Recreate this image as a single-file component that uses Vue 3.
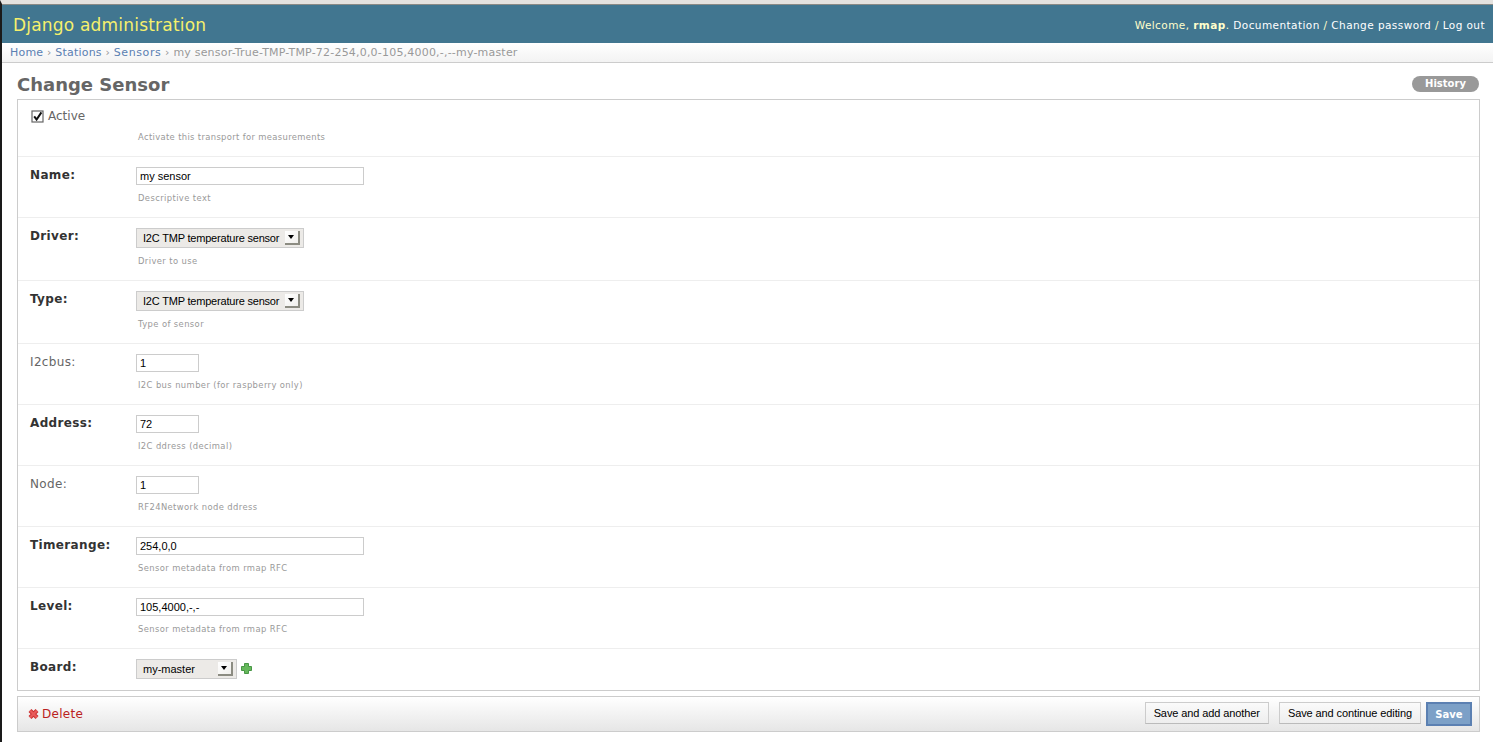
<script setup>
const rows = [
  { label: 'Name', req: true, kind: 'text', w: 'wide', value: 'my sensor', help: 'Descriptive text' },
  { label: 'Driver', req: true, kind: 'select', value: 'I2C TMP temperature sensor', help: 'Driver to use' },
  { label: 'Type', req: true, kind: 'select', value: 'I2C TMP temperature sensor', help: 'Type of sensor' },
  { label: 'I2cbus', req: false, kind: 'text', w: 'short', value: '1', help: 'I2C bus number (for raspberry only)' },
  { label: 'Address', req: true, kind: 'text', w: 'short', value: '72', help: 'I2C ddress (decimal)' },
  { label: 'Node', req: false, kind: 'text', w: 'short', value: '1', help: 'RF24Network node ddress' },
  { label: 'Timerange', req: true, kind: 'text', w: 'wide', value: '254,0,0', help: 'Sensor metadata from rmap RFC' },
  { label: 'Level', req: true, kind: 'text', w: 'wide', value: '105,4000,-,-', help: 'Sensor metadata from rmap RFC' },
]
</script>

<template>
  <div class="page">
    <header class="head">
      <div class="brand">Django administration</div>
      <div class="tools">Welcome, <strong>rmap</strong>. <a>Documentation</a> / <a>Change password</a> / <a>Log out</a></div>
    </header>
    <nav class="crumbs"><a>Home</a> › <a>Stations</a> › <a class="last">Sensors</a> › my sensor-True-TMP-TMP-72-254,0,0-105,4000,-,--my-master</nav>
    <main class="content">
      <div class="title-row">
        <h1>Change Sensor</h1>
        <a class="history">History</a>
      </div>
      <section class="fieldset">
        <div class="row row-check">
          <div class="check-line">
            <span class="checkbox">
              <svg width="13" height="13" viewBox="0 0 13 13"><rect x="1" y="1" width="11" height="11" fill="#fff" stroke="#666" stroke-width="1.2"/><path d="M3.2 6.4 L5.6 9.6 L10.4 2.4" fill="none" stroke="#111" stroke-width="2"/></svg>
            </span>
            <span class="check-label">Active</span>
          </div>
          <p class="help check-help">Activate this transport for measurements</p>
        </div>
        <div v-for="r in rows" :key="r.label" class="row">
          <div class="field">
            <label :class="{ req: r.req }">{{ r.label }}:</label>
            <input v-if="r.kind === 'text'" class="input" :class="r.w" :value="r.value" />
            <div v-else class="select"><span>{{ r.value }}</span><i class="arrow"></i></div>
          </div>
          <p class="help">{{ r.help }}</p>
        </div>
        <div class="row row-last">
          <div class="field">
            <label class="req">Board:</label>
            <div class="select select-short"><span>my-master</span><i class="arrow"></i></div>
            <svg class="plus" width="11" height="11" viewBox="0 0 11 11"><path d="M3.5 .5h4v3h3v4h-3v3h-4v-3h-3v-4h3z" fill="#66b85c" stroke="#3c8f3a" stroke-width=".9"/></svg>
          </div>
        </div>
      </section>
      <footer class="submit">
        <a class="delete">
          <svg width="11" height="12" viewBox="0 0 11 12"><path d="M2 2.5 L9 9.5 M9 2.5 L2 9.5" fill="none" stroke="#c92f2f" stroke-width="4.2"/><path d="M2 2.5 L9 9.5 M9 2.5 L2 9.5" fill="none" stroke="#e85a5a" stroke-width="2.4"/></svg>
          Delete
        </a>
        <div class="buttons">
          <button class="btn">Save and add another</button>
          <button class="btn">Save and continue editing</button>
          <button class="btn default">Save</button>
        </div>
      </footer>
    </main>
  </div>
</template>

<style>
html, body { margin: 0; background: #fff; }
</style>

<style scoped>
.page { box-sizing: border-box; height: 742px; overflow: hidden; border-left: 2px solid #1a1a1a; border-top: 4px solid #e4e2df; background: #fff; font-family: "DejaVu Sans", sans-serif; font-size: 11px; color: #333; }
.head { height: 39px; box-sizing: border-box; border-top: 1px solid #8a8a86; background: #417690; display: flex; justify-content: space-between; align-items: center; padding: 1px 8px 0 11px; }
.brand { font-size: 17px; letter-spacing: .2px; color: #f5f06c; }
.tools { font-size: 10.5px; letter-spacing: .43px; color: #ffc; }
.tools strong { font-weight: 700; }
.tools a { color: #fff; }
.crumbs { height: 20px; box-sizing: border-box; border-bottom: 1px solid #ccc; padding: 0 8px; line-height: 19px; font-size: 11px; letter-spacing: .2px; color: #999; background: linear-gradient(#fff, #f3f3f3); }
.crumbs a { color: #5b80b2; }
.crumbs .last { letter-spacing: .6px; }
.content { padding: 0 13px 0 15px; }
.title-row { height: 36px; display: flex; justify-content: space-between; align-items: center; }
h1 { margin: 7px 0 0; font-size: 18px; font-weight: 700; color: #666; }
.history { margin: 6px 1px 0 0; height: 16px; line-height: 16px; width: 67px; text-align: center; border-radius: 8px; background: #999; color: #fff; font-size: 10px; font-weight: 700; }
.fieldset { border: 1px solid #ccc; }
.row { box-sizing: border-box; padding: 10px 12px 0; border-bottom: 1px solid #eee; }
.row-check { height: 57px; padding: 10px 13px 0; }
.check-line { display: flex; align-items: center; height: 13px; }
.checkbox { display: flex; }
.check-label { margin-left: 4px; margin-top: -2px; font-size: 12px; color: #666; letter-spacing: 0; }
.field { display: flex; align-items: flex-start; }
label { width: 106px; padding-top: 1px; font-size: 12px; color: #666; letter-spacing: .35px; line-height: 14px; }
label.req { font-weight: 700; color: #333; }
.input { box-sizing: border-box; height: 18px; padding: 0 3px; border: 1px solid #ccc; font-family: "Liberation Sans", sans-serif; font-size: 11px; color: #000; outline: none; }
.wide { width: 228px; }
.short { width: 63px; }
.select { box-sizing: border-box; width: 168px; height: 20px; display: flex; align-items: center; justify-content: space-between; padding: 0 3px 0 6px; border: 1px solid #ccc; background: #eceae7; font-family: "Liberation Sans", sans-serif; font-size: 11px; letter-spacing: -.2px; color: #000; }
.select-short { width: 101px; }
.select-short span { letter-spacing: 0; }
.arrow { position: relative; box-sizing: border-box; width: 15px; height: 14px; background: linear-gradient(135deg, #fff, #f0efec); border-right: 2px solid #8c8c82; border-bottom: 2px solid #8c8c82; }
.arrow::after { content: ""; position: absolute; left: 3px; top: 4px; border: 3.5px solid transparent; border-top: 4px solid #000; border-bottom: 0; }
.plus { margin: 4px 0 0 4px; }
.help { box-sizing: border-box; margin: 0 0 0 108px; padding-top: 5px; height: 32px; font-size: 8.4px; line-height: 17px; letter-spacing: .4px; color: #999; }
.check-help { margin-left: 107px; padding-top: 6px; letter-spacing: .35px; }
.row-last { height: 41px; border-bottom: 0; }
.submit { margin-top: 5px; height: 36px; box-sizing: border-box; border: 1px solid #ccc; background: linear-gradient(#fff, #e6e6e6); display: flex; justify-content: space-between; align-items: flex-start; padding: 5px 7px 0 10px; }
.delete { height: 24px; color: #ba2121; font-size: 12px; letter-spacing: .3px; display: flex; align-items: center; gap: 3px; }
.buttons { display: flex; gap: 10px; align-items: flex-start; }
.btn { box-sizing: border-box; height: 22px; padding: 0 8px; border: 1px solid #ccc; border-bottom-color: #bbb; background: linear-gradient(#fafafa, #eee); font-family: "Liberation Sans", sans-serif; font-size: 11px; letter-spacing: -.1px; color: #000; }
.btn.default { margin-left: -5px; width: 46px; height: 24px; padding: 0; border: 2px solid #5b80b2; background: #7ca0c7; color: #fff; font-family: "DejaVu Sans", sans-serif; font-size: 10px; font-weight: 700; letter-spacing: 0; }
</style>
